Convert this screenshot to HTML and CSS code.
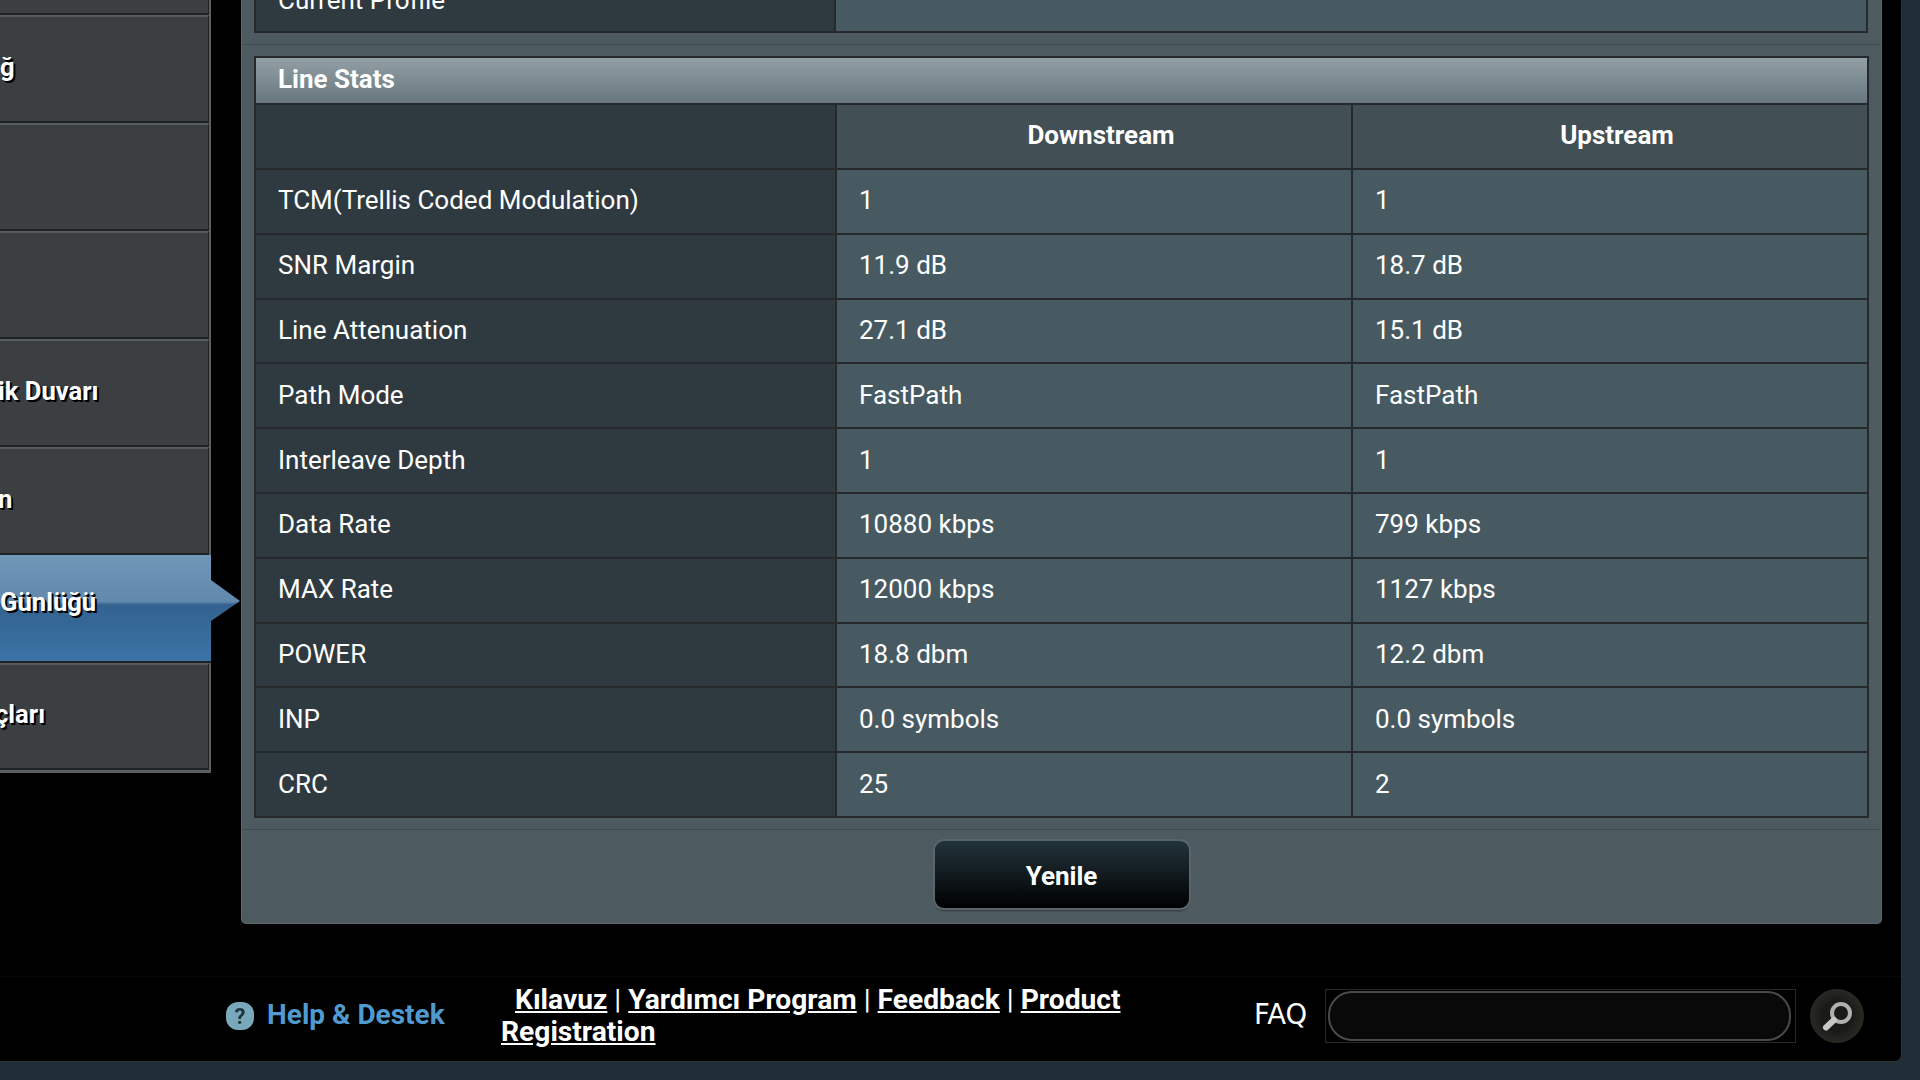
FILE: index.html
```html
<!DOCTYPE html>
<html lang="tr">
<head>
<meta charset="utf-8">
<title>Line Stats</title>
<link rel="stylesheet" href="styles.css">
</head>
<body>
<div class="window">
  <div class="layout">
    <nav class="side">
      <div class="item stub"></div>
      <div class="item">ğ</div>
      <div class="item"></div>
      <div class="item"></div>
      <div class="item"><span class="cut-s">ik Duvarı</span></div>
      <div class="item"><span class="cut-s">n</span></div>
      <div class="item active">Günlüğü</div>
      <div class="item last"><span class="cut-l">çları</span></div>
    </nav>
    <main class="panel">
      <table class="grid top">
        <tr><th class="label">Current Profile</th><td></td></tr>
      </table>
      <hr class="rule">
      <table class="grid stats">
        <colgroup><col class="c1"><col class="c2"><col class="c3"></colgroup>
        <thead>
          <tr class="title"><td colspan="3">Line Stats</td></tr>
          <tr class="head"><th class="label"></th><th>Downstream</th><th>Upstream</th></tr>
        </thead>
        <tbody>
          <tr><th class="label">TCM(Trellis Coded Modulation)</th><td>1</td><td>1</td></tr>
          <tr><th class="label">SNR Margin</th><td>11.9 dB</td><td>18.7 dB</td></tr>
          <tr><th class="label">Line Attenuation</th><td>27.1 dB</td><td>15.1 dB</td></tr>
          <tr><th class="label">Path Mode</th><td>FastPath</td><td>FastPath</td></tr>
          <tr><th class="label">Interleave Depth</th><td>1</td><td>1</td></tr>
          <tr><th class="label">Data Rate</th><td>10880 kbps</td><td>799 kbps</td></tr>
          <tr><th class="label">MAX Rate</th><td>12000 kbps</td><td>1127 kbps</td></tr>
          <tr><th class="label">POWER</th><td>18.8 dbm</td><td>12.2 dbm</td></tr>
          <tr><th class="label">INP</th><td>0.0 symbols</td><td>0.0 symbols</td></tr>
          <tr><th class="label">CRC</th><td>25</td><td>2</td></tr>
        </tbody>
      </table>
      <hr class="rule low">
      <div class="actions"><button class="btn" type="button">Yenile</button></div>
    </main>
  </div>
  <footer class="foot">
    <div class="help">
      <svg class="q" viewBox="0 0 30 30" width="30" height="30"><rect x="1" y="1" width="28" height="28" rx="12" fill="#7aa8bb"/><text x="15" y="23" text-anchor="middle" class="qm">?</text></svg>
      <span>Help &amp; Destek</span>
    </div>
    <div class="links">
      &nbsp;&nbsp;<a href="#">Kılavuz</a> | <a href="#">Yardımcı Program</a> | <a href="#">Feedback</a> | <a href="#">Product Registration</a>
    </div>
    <div class="faq">
      <span class="faq-label">FAQ</span>
      <div class="box"><div class="field"></div></div>
      <div class="go">
        <svg viewBox="0 0 54 54" width="54" height="54"><circle cx="31" cy="24" r="9" fill="none" stroke="#b0b0ac" stroke-width="4"/><path d="M24 31 L16 38.5" stroke="#c8c8c3" stroke-width="6" stroke-linecap="round"/></svg>
      </div>
    </div>
  </footer>
</div>
</body>
</html>
```
FILE: styles.css
```css
html, body { margin: 0; height: 100%; overflow: hidden; }
body { background: #1f2d37; font-family: Roboto, sans-serif; color: #fff; }
.window {
  width: 1901px; height: 1061px; background: #000;
  border-bottom-right-radius: 6px;
  box-shadow: 1px 1px 0 #2c3235;
  display: flex; flex-direction: column;
  overflow: hidden;
}
.layout { display: flex; align-items: flex-start; height: 977px; flex: none; border-bottom: 1px solid #070707; box-sizing: border-box; }
.side { width: 211px; flex: none; background: #5a5f61; padding-bottom: 3px; }
.item {
  height: 108px; box-sizing: border-box;
  margin-right: 2px; background: #3b3f42;
  border-top: 2px solid #575c5e; border-bottom: 2px solid #202325; border-right: 1px solid #202325;
  display: flex; align-items: center;
  font-size: 25.6px; font-weight: 700; padding-bottom: 2px;
  text-shadow: 2px 2px 0 #000, 1px 1px 0 #000;
  line-height: 1;
}
.cut-s { margin-left: -2px; }
.cut-l { margin-left: -5px; }
.stub { height: 15px; border-top: 0; padding: 0; }
.last { height: 107px; padding-bottom: 4px; border-bottom-color: #202325; }
.active {
  position: relative; margin-right: 0; height: 108px; padding-bottom: 10px;
  border: 0; border-bottom: 2px solid #202325;
  background: linear-gradient(#7097b8 0, #6288ab 44%, #33628f 47%, #3a74a6 100%);
}
.active::after {
  content: ""; position: absolute; left: 100%; top: 0; width: 29px; height: 106px;
  background: linear-gradient(#7097b8 0, #6288ab 44%, #33628f 47%, #3a74a6 100%);
  clip-path: polygon(0 25px, 100% 46px, 0 66px);
}
.panel {
  margin: -32px 0 0 30px; width: 1641px; box-sizing: border-box;
  height: 956px; background: #4d5a60;
  border-radius: 0 0 5px 5px; border: 1px solid #5a676d; border-top: 0;
  padding: 0 12px;
  flex: none;
}
.grid { border-collapse: collapse; table-layout: fixed; width: 1614px; font-size: 26px; }
.grid th, .grid td { border: 2px solid #25292b; padding: 0 22px 2px; font-weight: 400; text-align: left; }
.top { height: 65px; }
.top .label { width: 534px; background: #2f3a40; }
.top td { background: #475a62; }
.c1 { width: 581px; }
.c2, .c3 { width: 516px; }
.rule { border: 0; height: 1px; background: #3f4b50; margin: 11px -12px 11px; }
.rule.low { margin: 11px -12px 0; }
.grid .title td {
  height: 47px; box-sizing: border-box; padding: 0 22px 4px; font-weight: 700;
  background: linear-gradient(#929fa5, #68777f);
}
.head { height: 65px; }
.stats tbody tr { height: 64.8px; }
.stats .label { background: #2f3a40; }
.stats tbody td { background: #475a62; }
.grid .head th { background: #424f55; font-weight: 700; text-align: center; padding: 0 15px 3px 29px; }
.grid .head .label { background: #2f3a40; }
.actions { display: flex; justify-content: center; padding: 11px 0 0 0; }
.btn {
  width: 254px; height: 67px; border: 0; border-radius: 9px; padding: 3px 0 0;
  background: linear-gradient(#22343c, #000);
  box-shadow: 0 0 0 2px #59656a, 0 3px 2px #2f383c;
  color: #fff; font: 700 26px Roboto, sans-serif;
}
.foot { flex: 1; display: flex; align-items: center; position: relative; padding-bottom: 6px; }
.help { display: flex; align-items: center; margin-left: 225px; width: 276px; flex: none; color: #509ad0; font-size: 28px; font-weight: 700; gap: 12px; }
.help span { margin-bottom: 4px; }
.q { flex: none; filter: blur(0.6px); }
.qm { font: 700 22px Roboto, sans-serif; fill: #20343f; }
.links { width: 700px; flex: none; font-size: 28.2px; line-height: 32px; font-weight: 400; }
.links a { color: #fff; font-weight: 700; }
.faq { margin-left: 53px; display: flex; align-items: center; }
.faq-label { font: 400 27.5px "DejaVu Sans", sans-serif; width: 71px; margin-bottom: 4px; }
.box { width: 471px; height: 54px; box-sizing: border-box; border: 1px solid #2a2a2a; padding: 1px 4px 1px 2px; }
.field { height: 100%; box-sizing: border-box; background: #090909; border: 2px solid #4a4a4a; border-radius: 24px; }
.go { width: 54px; height: 54px; margin-left: 14px; border-radius: 50%; background: radial-gradient(circle, #1a1a18 40%, #33332c 90%); }
```
